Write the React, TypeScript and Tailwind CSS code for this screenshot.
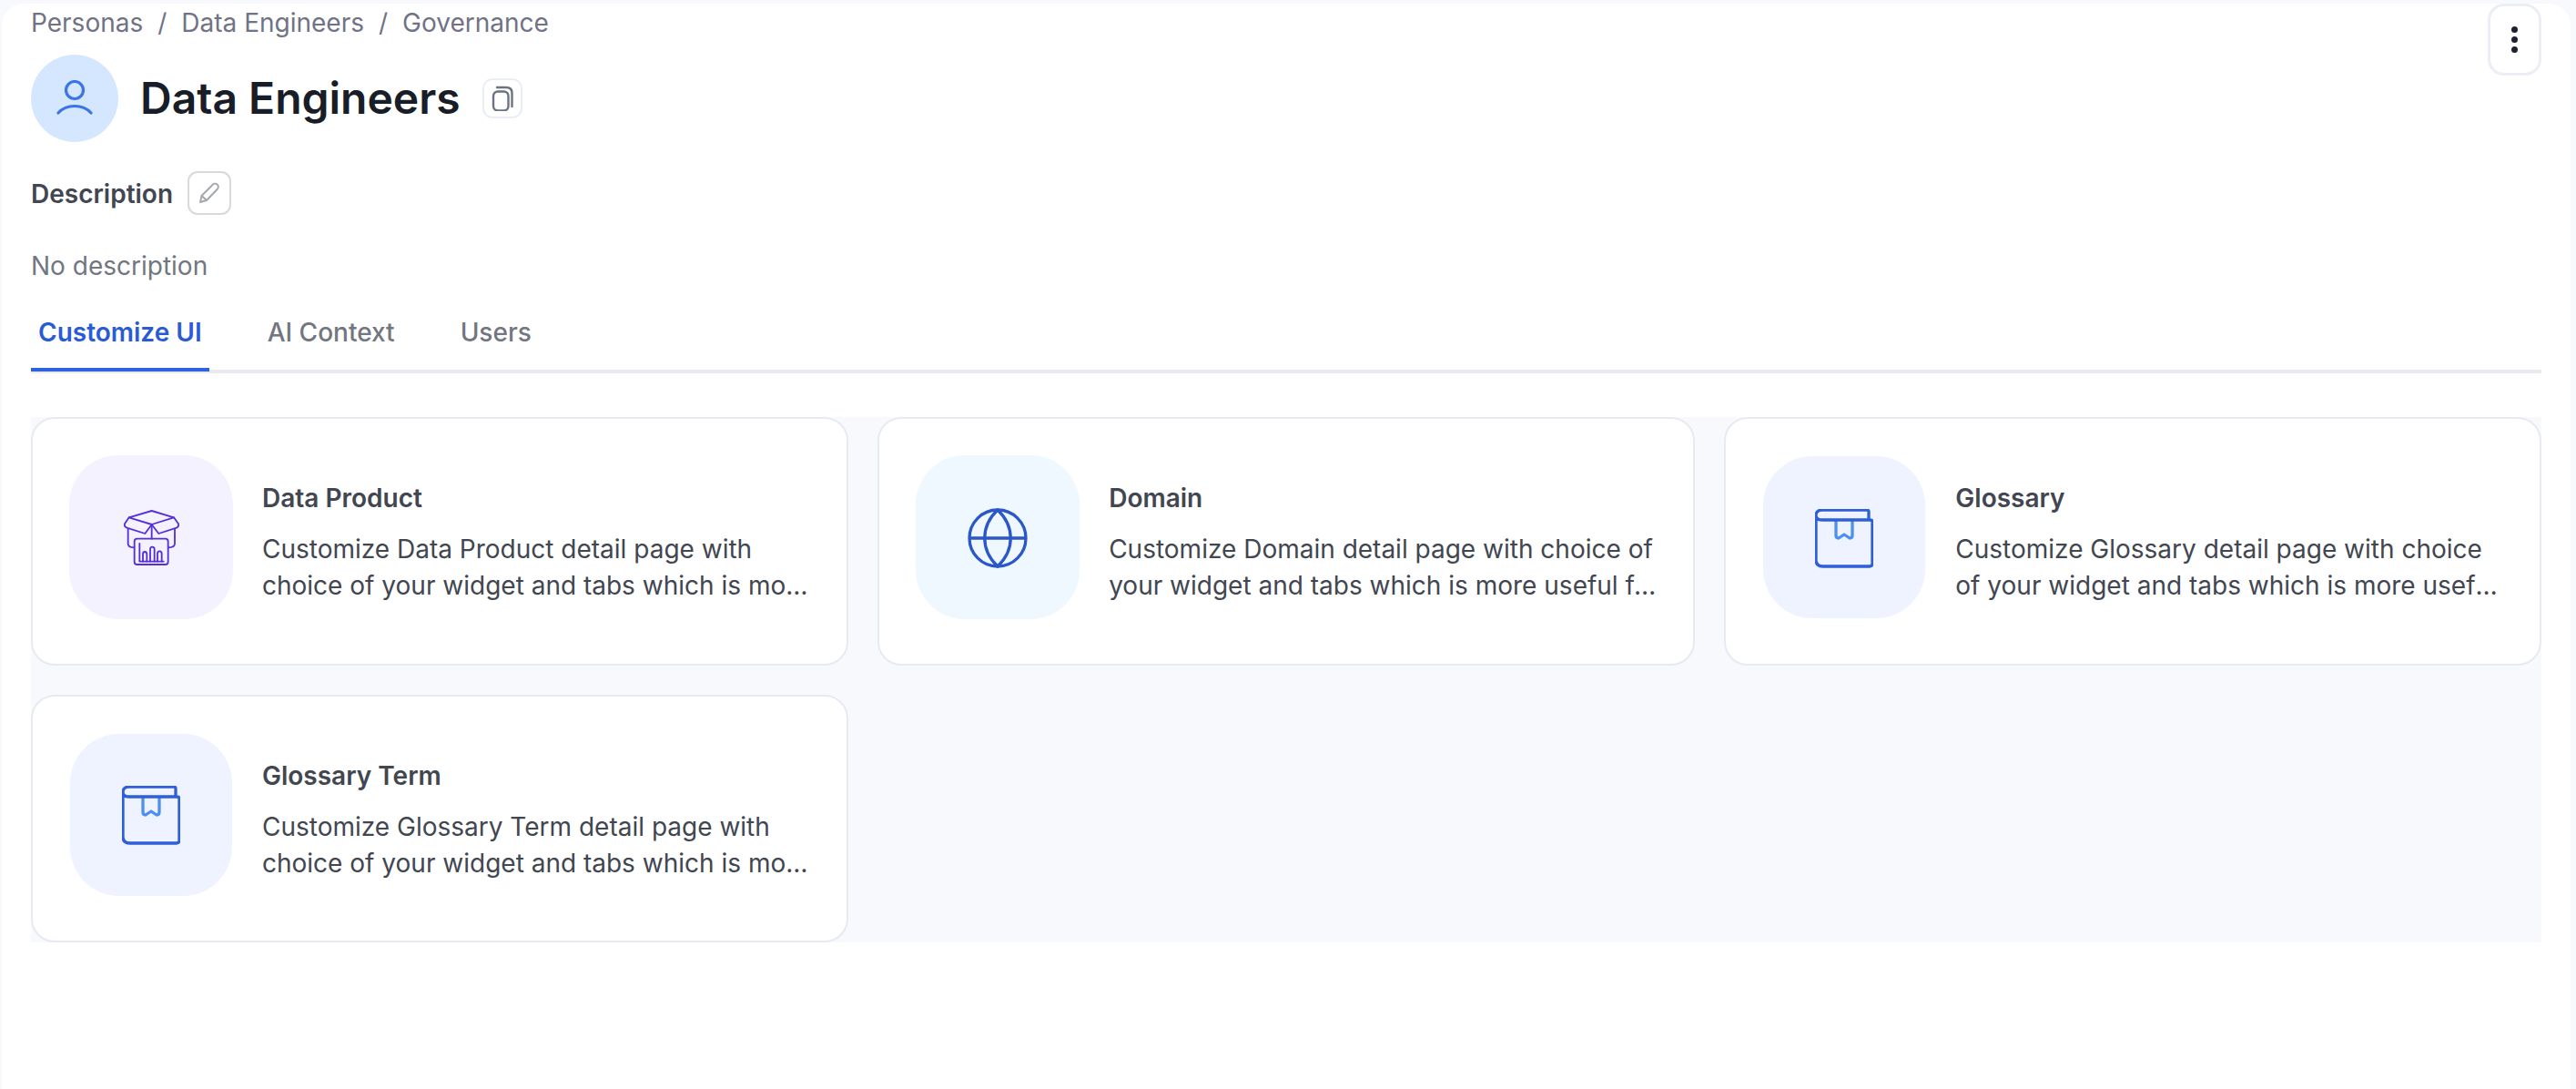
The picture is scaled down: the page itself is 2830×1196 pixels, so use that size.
const cards = [
  {
    title: "Data Product",
    text: "Customize Data Product detail page with choice of your widget and tabs which is more useful for your persona",
    box: "h-[180px] w-[180px] bg-[#f4f2ff]",
    icon: "product",
  },
  {
    title: "Domain",
    text: "Customize Domain detail page with choice of your widget and tabs which is more useful for your persona",
    box: "h-[180px] w-[180px] bg-[#eff7ff]",
    icon: "globe",
  },
  {
    title: "Glossary",
    text: "Customize Glossary detail page with choice of your widget and tabs which is more useful for your persona",
    box: "m-[1px] h-[178px] w-[178px] bg-[#eef3ff]",
    icon: "book",
  },
  {
    title: "Glossary Term",
    text: "Customize Glossary Term detail page with choice of your widget and tabs which is more useful for your persona",
    box: "m-[1px] h-[178px] w-[178px] bg-[#eef3ff]",
    icon: "book",
  },
];

function ProductIcon() {
  return (
    <svg width="61" height="61" viewBox="170 180 183 183" fill="none" stroke="#5530d9" strokeWidth="5.5" strokeLinecap="round" strokeLinejoin="round">
      <path d="M187 205 L262 183 L335 205 L262 228 Z" />
      <path d="M187 205 L173 226 Q170 234 180 239 L240 258 L262 228" />
      <path d="M335 205 L350 226 Q353 234 344 239 L285 258 L262 228" />
      <path d="M184 243 V292 Q184 304 204 304" />
      <path d="M338 243 V292 Q338 304 317 304" />
      <path d="M262 228 V275" />
      <rect x="205" y="275" width="111" height="85" rx="9" />
      <path d="M222 291 V350 H301" />
      <path d="M233 350 V326 Q233 318 239 318 Q246 318 246 326 V350" />
      <path d="M257 350 V310 Q257 302 264 302 Q271 302 271 310 V350" />
      <path d="M281 350 V324 Q281 316 288 316 Q295 316 295 324 V350" />
    </svg>
  );
}

function GlobeIcon() {
  return (
    <svg className="mt-[2px]" width="66" height="66" viewBox="0 0 66 66" fill="none" stroke="#2b57c9" strokeWidth="3.3">
      <circle cx="33" cy="33" r="31" />
      <path d="M2 33 H64" />
      <path d="M33 2 C14 20 14 46 33 64 C52 46 52 20 33 2 Z" />
    </svg>
  );
}

function BookIcon() {
  return (
    <svg className="mt-[2px]" width="64" height="65" viewBox="0 0 64 65" fill="none" strokeWidth="3.3" strokeLinejoin="round" strokeLinecap="round">
      <path d="M23 13 V29 Q23 32 26 32 L32 28 L38 32 Q41 32 41 29 V13" stroke="#4a90f5" />
      <path
        d="M59 12 V3 Q59 1 57 1 H8 C3 1 1 4 1 7 V56 C1 61 4 63 9 63 H60 Q63 63 63 60 V14 Q63 12 60 12 H8 C3 12 1 10 1 7"
        stroke="#2d5fd6"
      />
    </svg>
  );
}

function CardIcon({ name }: { name: string }) {
  if (name === "product") return <ProductIcon />;
  if (name === "globe") return <GlobeIcon />;
  return <BookIcon />;
}

export default function App() {
  return (
    <div className="h-[1196px] overflow-hidden bg-[#f8f9fd] pt-[4px] pl-[2px] pr-[6px] font-['Inter',sans-serif]">
      <div className="h-full rounded-t-[24px] bg-white px-[32px]">
        <div className="flex items-start justify-between">
          <div>
            <div className="flex h-[40px] items-center gap-[16px] pt-[1px] text-[28px] text-[#6f7385]">
              <span>Personas</span>
              <span>/</span>
              <span>Data Engineers</span>
              <span>/</span>
              <span>Governance</span>
            </div>
            <div className="mt-[16px] flex items-center">
              <div className="flex h-[96px] w-[96px] items-center justify-center rounded-full bg-[#d5e7ff]">
                <svg width="40" height="40" viewBox="0 0 40 40" fill="none" stroke="#3b74e8" strokeWidth="3.2" strokeLinecap="round">
                  <circle cx="20" cy="11" r="9.5" />
                  <path d="M2 36 C11 26 29 26 38 36" />
                </svg>
              </div>
              <h1 className="ml-[24px] text-[48px] font-semibold leading-[60px] text-[#181d27]">Data Engineers</h1>
              <button className="ml-[24px] flex h-[44px] w-[44px] items-center justify-center rounded-[11px] border-2 border-[#eceef5]">
                <svg width="24" height="28" viewBox="0 0 24 28" fill="none" stroke="#6b7280" strokeWidth="2.4" strokeLinecap="round">
                  <rect x="2" y="6.5" width="16.5" height="21" rx="5" />
                  <path d="M6 2 H16 Q22.5 2 22.5 8 V23" />
                </svg>
              </button>
            </div>
          </div>
          <button className="flex h-[79px] w-[59px] flex-col items-center justify-center gap-[4px] rounded-[18px] border-[3px] border-[#ecedf5]">
            <span className="h-[7px] w-[7px] rounded-full bg-[#1c2230]" />
            <span className="h-[7px] w-[7px] rounded-full bg-[#1c2230]" />
            <span className="h-[7px] w-[7px] rounded-full bg-[#1c2230]" />
          </button>
        </div>

        <div className="mt-[32px] flex h-[48px] items-center">
          <span className="pt-[1px] text-[28px] font-semibold text-[#414651]">Description</span>
          <button className="ml-[16px] flex h-[48px] w-[48px] items-center justify-center rounded-[11px] border-2 border-[#d9d9dd]">
            <svg width="24" height="24" viewBox="0 0 24 24" fill="none" stroke="#a3a6ad" strokeWidth="1.9" strokeLinejoin="round">
              <path d="M2 22 L3.5 15 L15.5 3 A3.2 3.2 0 0 1 21 7.5 L9 20 Z" />
              <path d="M3.5 15 L9 20" />
            </svg>
          </button>
        </div>

        <p className="mt-[36px] text-[28px] leading-[40px] text-[#717680]">No description</p>

        <div className="mt-[32px] flex gap-[56px] border-b-4 border-[#e9eaee]">
          <div className="-mb-[2px] border-b-4 border-[#2f62e0] px-[8px] pt-[1px] pb-[19px] text-[28px] font-semibold leading-[40px] text-[#2a5bd7]">
            Customize UI
          </div>
          <div className="px-[8px] pt-[1px] pb-[21px] text-[28px] font-medium leading-[40px] text-[#717680]">AI Context</div>
          <div className="px-[8px] pt-[1px] pb-[21px] text-[28px] font-medium leading-[40px] text-[#717680]">Users</div>
        </div>

        <div className="mt-[48px] grid grid-cols-3 gap-x-[32.5px] gap-y-[32px] bg-[#f8f9fd]">
          {cards.map((card) => (
            <div
              key={card.title}
              className="flex h-[272.5px] items-start gap-[32px] rounded-[26px] border-[2px] border-[#e8eaf3] bg-white pl-[40px] pr-[34px] pt-[40px]"
            >
              <div className={`flex shrink-0 items-center justify-center rounded-[54px] ${card.box}`}>
                <CardIcon name={card.icon} />
              </div>
              <div className="min-w-0 pt-[27px]">
                <div className="text-[28px] font-semibold leading-[40px] text-[#414651]">{card.title}</div>
                <p className="mt-[16px] line-clamp-2 text-[28px] leading-[40px] text-[#414651]">{card.text}</p>
              </div>
            </div>
          ))}
        </div>
      </div>
    </div>
  );
}
